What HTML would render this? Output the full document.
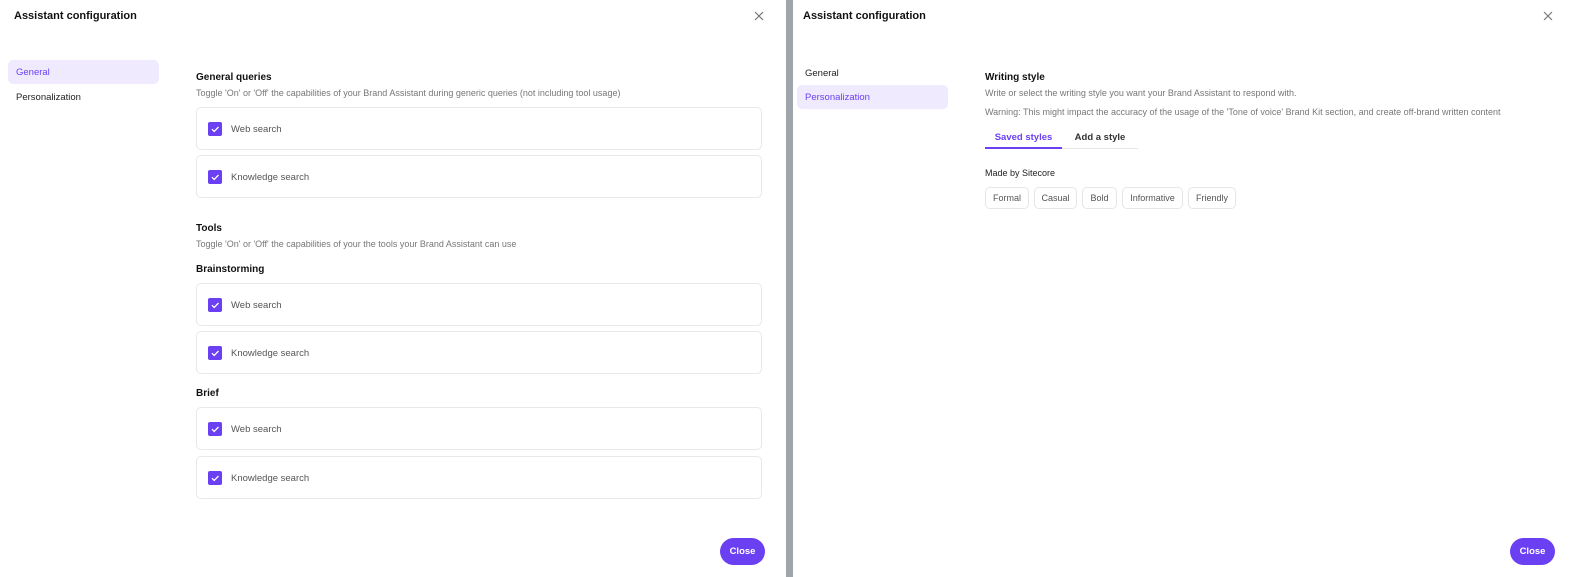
<!DOCTYPE html>
<html><head><meta charset="utf-8"><style>
*{margin:0;padding:0;box-sizing:border-box}
body{width:1576px;height:577px;overflow:hidden;background:#fff;font-family:"Liberation Sans",sans-serif;color:#1a1a1a;position:relative}
.a{position:absolute;white-space:nowrap}
.title{font-size:11px;font-weight:bold;color:#111}
.h{font-size:10px;font-weight:bold;color:#111}
.d{font-size:9px;color:#777}
.nav{font-size:9.5px;color:#222}
.sel{background:#efeafd;border-radius:5px;color:#6b3ff2}
.box{position:absolute;left:196px;width:566px;height:43px;border:1px solid #e8e8ea;border-radius:5px}
.box .cb{position:absolute;left:11px;top:14px;width:14px;height:14px;background:#6b3ff2;border-radius:2px}
.box .t{position:absolute;left:34px;top:16px;font-size:9.5px;color:#555}
.btn{position:absolute;height:27px;width:45px;border-radius:14px;background:#6b3ff2;color:#fff;font-size:9.5px;font-weight:bold;text-align:center;line-height:27px}
.chip{position:absolute;top:187px;height:22px;border:1px solid #e6e6e8;border-radius:5px;font-size:9px;color:#555;text-align:center;line-height:20px}
</style></head><body>
<div class="a" style="left:786px;top:0;width:7px;height:577px;background:#9ea5ab"></div>

<!-- left -->
<div class="a title" style="left:14px;top:10px">Assistant configuration</div>
<svg class="a" style="left:754px;top:11px" width="10" height="10"><path d="M1 1L9 9M9 1L1 9" stroke="#777" stroke-width="1.2"/></svg>
<div class="a nav sel" style="left:8px;top:60px;width:151px;height:24px;padding:7px 8px">General</div>
<div class="a nav" style="left:16px;top:92px">Personalization</div>

<div class="a h" style="left:196px;top:72px">General queries</div>
<div class="a d" style="left:196px;top:88px">Toggle 'On' or 'Off' the capabilities of your Brand Assistant during generic queries (not including tool usage)</div>
<div class="box" style="top:107px"><div class="cb"><svg width="14" height="14"><path d="M4 7.2l2.2 2.2L10.5 5" stroke="#fff" stroke-width="1.3" fill="none"/></svg></div><div class="t">Web search</div></div>
<div class="box" style="top:155px"><div class="cb"><svg width="14" height="14"><path d="M4 7.2l2.2 2.2L10.5 5" stroke="#fff" stroke-width="1.3" fill="none"/></svg></div><div class="t">Knowledge search</div></div>

<div class="a h" style="left:196px;top:223px">Tools</div>
<div class="a d" style="left:196px;top:239px">Toggle 'On' or 'Off' the capabilities of your the tools your Brand Assistant can use</div>
<div class="a h" style="left:196px;top:264px">Brainstorming</div>
<div class="box" style="top:283px"><div class="cb"><svg width="14" height="14"><path d="M4 7.2l2.2 2.2L10.5 5" stroke="#fff" stroke-width="1.3" fill="none"/></svg></div><div class="t">Web search</div></div>
<div class="box" style="top:331px"><div class="cb"><svg width="14" height="14"><path d="M4 7.2l2.2 2.2L10.5 5" stroke="#fff" stroke-width="1.3" fill="none"/></svg></div><div class="t">Knowledge search</div></div>
<div class="a h" style="left:196px;top:388px">Brief</div>
<div class="box" style="top:407px"><div class="cb"><svg width="14" height="14"><path d="M4 7.2l2.2 2.2L10.5 5" stroke="#fff" stroke-width="1.3" fill="none"/></svg></div><div class="t">Web search</div></div>
<div class="box" style="top:456px"><div class="cb"><svg width="14" height="14"><path d="M4 7.2l2.2 2.2L10.5 5" stroke="#fff" stroke-width="1.3" fill="none"/></svg></div><div class="t">Knowledge search</div></div>
<div class="btn" style="left:720px;top:538px">Close</div>

<!-- right -->
<div class="a title" style="left:803px;top:10px">Assistant configuration</div>
<svg class="a" style="left:1543px;top:11px" width="10" height="10"><path d="M1 1L9 9M9 1L1 9" stroke="#777" stroke-width="1.2"/></svg>
<div class="a nav" style="left:805px;top:68px">General</div>
<div class="a nav sel" style="left:797px;top:85px;width:151px;height:24px;padding:7px 8px">Personalization</div>

<div class="a h" style="left:985px;top:72px">Writing style</div>
<div class="a d" style="left:985px;top:88px">Write or select the writing style you want your Brand Assistant to respond with.</div>
<div class="a d" style="left:985px;top:107px">Warning: This might impact the accuracy of the usage of the 'Tone of voice' Brand Kit section, and create off-brand written content</div>
<div class="a" style="left:985px;top:148px;width:153px;height:1px;background:#e6e6e8"></div>
<div class="a" style="left:985px;top:147px;width:77px;height:2px;background:#6b3ff2"></div>
<div class="a" style="left:985px;top:132px;width:77px;text-align:center;font-size:9.5px;font-weight:bold;color:#6b3ff2">Saved styles</div>
<div class="a" style="left:1062px;top:132px;width:76px;text-align:center;font-size:9.5px;font-weight:bold;color:#333">Add a style</div>
<div class="a" style="left:985px;top:168px;font-size:9px;color:#222">Made by Sitecore</div>
<div class="chip" style="left:985px;width:44px">Formal</div>
<div class="chip" style="left:1034px;width:43px">Casual</div>
<div class="chip" style="left:1082px;width:35px">Bold</div>
<div class="chip" style="left:1122px;width:61px">Informative</div>
<div class="chip" style="left:1188px;width:48px">Friendly</div>
<div class="btn" style="left:1510px;top:538px">Close</div>
</body></html>
